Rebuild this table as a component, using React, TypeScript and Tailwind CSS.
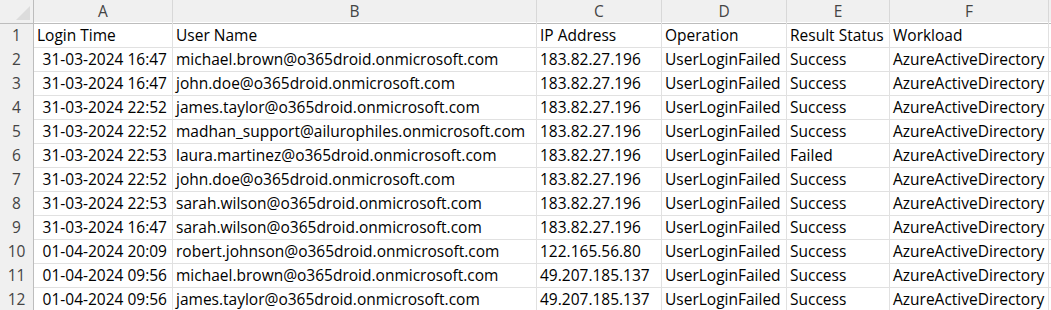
const columns = ["A", "B", "C", "D", "E", "F"];

const headers = ["Login Time", "User Name", "IP Address", "Operation", "Result Status", "Workload"];

const rows: string[][] = [
  ["31-03-2024 16:47", "michael.brown@o365droid.onmicrosoft.com", "183.82.27.196", "UserLoginFailed", "Success", "AzureActiveDirectory"],
  ["31-03-2024 16:47", "john.doe@o365droid.onmicrosoft.com", "183.82.27.196", "UserLoginFailed", "Success", "AzureActiveDirectory"],
  ["31-03-2024 22:52", "james.taylor@o365droid.onmicrosoft.com", "183.82.27.196", "UserLoginFailed", "Success", "AzureActiveDirectory"],
  ["31-03-2024 22:52", "madhan_support@ailurophiles.onmicrosoft.com", "183.82.27.196", "UserLoginFailed", "Success", "AzureActiveDirectory"],
  ["31-03-2024 22:53", "laura.martinez@o365droid.onmicrosoft.com", "183.82.27.196", "UserLoginFailed", "Failed", "AzureActiveDirectory"],
  ["31-03-2024 22:52", "john.doe@o365droid.onmicrosoft.com", "183.82.27.196", "UserLoginFailed", "Success", "AzureActiveDirectory"],
  ["31-03-2024 22:53", "sarah.wilson@o365droid.onmicrosoft.com", "183.82.27.196", "UserLoginFailed", "Success", "AzureActiveDirectory"],
  ["31-03-2024 16:47", "sarah.wilson@o365droid.onmicrosoft.com", "183.82.27.196", "UserLoginFailed", "Success", "AzureActiveDirectory"],
  ["01-04-2024 20:09", "robert.johnson@o365droid.onmicrosoft.com", "122.165.56.80", "UserLoginFailed", "Success", "AzureActiveDirectory"],
  ["01-04-2024 09:56", "michael.brown@o365droid.onmicrosoft.com", "49.207.185.137", "UserLoginFailed", "Success", "AzureActiveDirectory"],
  ["01-04-2024 09:56", "james.taylor@o365droid.onmicrosoft.com", "49.207.185.137", "UserLoginFailed", "Success", "AzureActiveDirectory"],
];

const gridCols = "grid grid-cols-[34px_139px_364px_125px_125px_103px_159px_1fr]";

function App() {
  return (
    <div
      className="w-[1051px] h-[310px] overflow-hidden bg-white text-[15.5px] text-black"
      style={{ fontFamily: '"Open Sans", "Liberation Sans", sans-serif' }}
    >
      {/* column letters */}
      <div className={`${gridCols} h-[22px] bg-[#f0f0f0] text-[#444]`}>
        <div className="relative border-r border-b border-[#bdbdbd]">
          <svg className="absolute right-[3px] bottom-[3px]" width="14" height="14" viewBox="0 0 14 14">
            <polygon points="14,0 14,14 0,14" fill="#dcdcdc" />
          </svg>
        </div>
        {columns.map((c) => (
          <div key={c} className="flex items-center justify-center border-r border-b border-r-[#d8d8d8] border-b-[#bdbdbd]">
            {c}
          </div>
        ))}
        <div className="border-b border-[#bdbdbd]" />
      </div>

      {[headers, ...rows].map((row, i) => (
        <div key={i} className={`${gridCols} h-6`}>
          <div className="flex items-center justify-center pt-[2px] bg-[#f0f0f0] text-[#444] border-r border-b border-r-[#bdbdbd] border-b-[#dcdcdc]">
            {i + 1}
          </div>
          {row.map((cell, j) => (
            <div
              key={j}
              className={`flex items-center pt-[2px] whitespace-nowrap overflow-hidden border-r border-b border-[#e1e1e1] ${
                i > 0 && j === 0 ? "justify-end pr-[5px]" : "pl-[3px]"
              }`}
            >
              {cell}
            </div>
          ))}
          <div className="border-b border-[#e1e1e1]" />
        </div>
      ))}
    </div>
  );
}

export default App;
